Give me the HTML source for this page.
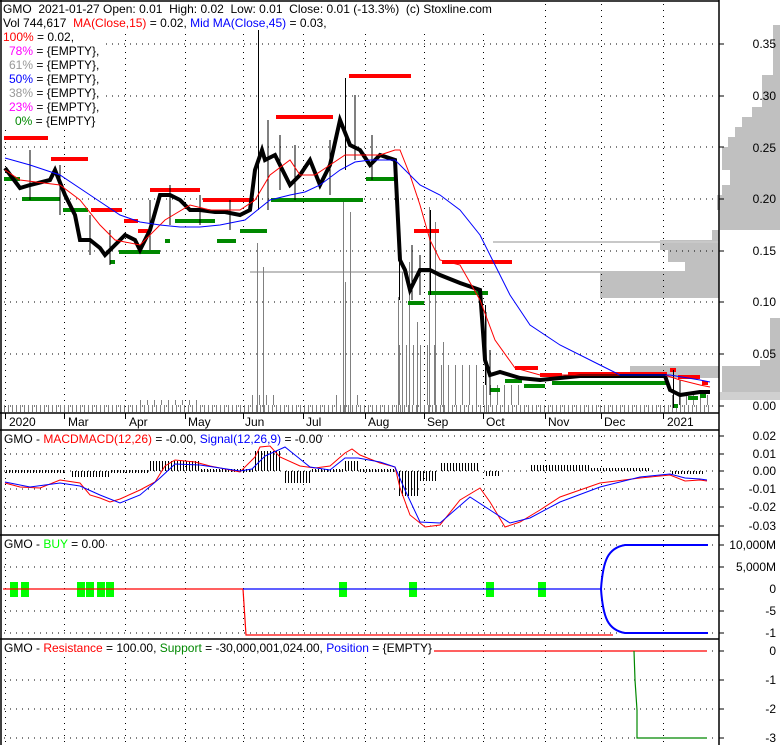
<!DOCTYPE html>
<html><head><meta charset="utf-8"><style>
html,body{margin:0;padding:0;background:#fff;}
svg{display:block;font-family:"Liberation Sans",Arial,sans-serif;font-size:12px;}
text{white-space:pre;}
</style></head><body>
<svg width="780" height="745" xmlns="http://www.w3.org/2000/svg">
<defs>
<pattern id="vp" x="0" y="0" width="4" height="10" patternUnits="userSpaceOnUse"><rect x="0" y="0" width="1" height="10" fill="#808080"/></pattern>
<pattern id="vp2" x="0" y="0" width="7" height="10" patternUnits="userSpaceOnUse"><rect x="0" y="0" width="1" height="10" fill="#808080"/></pattern>
<pattern id="hp" x="0" y="0" width="3" height="10" patternUnits="userSpaceOnUse"><rect x="0" y="0" width="1" height="10" fill="#000"/></pattern>
</defs>
<rect width="780" height="745" fill="#fff"/>
<g fill="#c0c0c0">
<polygon points="780,25 773,25 773,75 762,75 762,107 752,107 752,117 742,117 742,127 735,127 735,137 728,137 728,147 722,147 722,170 730,170 730,185 722,185 722,195 717,195 717,210 720,210 720,230 780,230"/>
<polygon points="719,230 712,230 712,240 660,240 660,250 668,250 668,262 685,262 685,273 600,273 600,298 719,298"/>
<polygon points="780,318 770,318 770,360 760,360 760,366 722,366 722,392 780,392"/>
<polygon points="719,366 630,366 630,378 719,378"/>
<rect x="719" y="392" width="61" height="8" fill="#d0d0d0"/>
</g>
<line x1="250" y1="272" x2="719" y2="272" stroke="#c0c0c0" stroke-width="2"/>
<line x1="493" y1="242" x2="719" y2="242" stroke="#c8c8c8" stroke-width="2"/>
<g stroke="#000" stroke-dasharray="1,5" stroke-width="1" shape-rendering="crispEdges">
<path d="M4 44H716M4 96H716M4 147H716M4 199H716M4 251H716M4 302H716M4 354H716M4 406H716M4 436H716M4 454H716M4 471H716M4 489H716M4 507H716M4 526H716M4 545H716M4 567H716M4 589H716M4 611H716M4 633H716M4 651H716M4 680H716M4 709H716M4 738H716"/>
<path d="M5.5 4V410M64.5 4V410M125.5 4V410M185.5 4V410M243.5 4V410M303.5 4V410M365.5 4V410M424.5 4V410M483.5 4V410M545.5 4V410M601.5 4V410M663.5 4V410"/>
<path d="M5.5 436V532M64.5 436V532M125.5 436V532M185.5 436V532M243.5 436V532M303.5 436V532M365.5 436V532M424.5 436V532M483.5 436V532M545.5 436V532M601.5 436V532M663.5 436V532"/>
<path d="M5.5 540V636M64.5 540V636M125.5 540V636M185.5 540V636M243.5 540V636M303.5 540V636M365.5 540V636M424.5 540V636M483.5 540V636M545.5 540V636M601.5 540V636M663.5 540V636"/>
<path d="M5.5 645V742M64.5 645V742M125.5 645V742M185.5 645V742M243.5 645V742M303.5 645V742M365.5 645V742M424.5 645V742M483.5 645V742M545.5 645V742M601.5 645V742M663.5 645V742"/>
</g>
<rect x="3" y="405" width="709" height="7" fill="url(#vp)"/>
<rect x="140" y="400" width="60" height="5" fill="url(#vp2)"/>
<rect x="248" y="395" width="30" height="10" fill="url(#vp2)"/>
<rect x="330" y="395" width="30" height="10" fill="url(#vp2)"/>
<rect x="395" y="345" width="40" height="60" fill="url(#vp2)"/>
<rect x="435" y="365" width="45" height="40" fill="url(#vp2)"/>
<rect x="480" y="385" width="40" height="20" fill="url(#vp2)"/>
<rect x="670" y="395" width="40" height="10" fill="url(#vp2)"/>
<path stroke="#808080" stroke-width="1" d="M257.5 412V243M263.5 412V267M345.5 412V282M343.5 412V202M350.5 412V212M398.5 412V297M402.5 412V272M409.5 412V262M417.5 412V322M429.5 412V207M435.5 412V222M443.5 412V342M486.5 412V312"/>
<g stroke-width="4">
<line x1="4" y1="138" x2="48" y2="138" stroke="#f00"/>
<line x1="51" y1="159" x2="88" y2="159" stroke="#f00"/>
<line x1="91" y1="210" x2="122" y2="210" stroke="#f00"/>
<line x1="124" y1="221" x2="138" y2="221" stroke="#f00"/>
<line x1="138" y1="231" x2="148" y2="231" stroke="#f00"/>
<line x1="150" y1="190" x2="200" y2="190" stroke="#f00"/>
<line x1="203" y1="200" x2="254" y2="200" stroke="#f00"/>
<line x1="276" y1="117" x2="333" y2="117" stroke="#f00"/>
<line x1="349" y1="76" x2="411" y2="76" stroke="#f00"/>
<line x1="414" y1="231" x2="439" y2="231" stroke="#f00"/>
<line x1="442" y1="262" x2="512" y2="262" stroke="#f00"/>
<line x1="515" y1="368" x2="538" y2="368" stroke="#f00"/>
<line x1="540" y1="375" x2="562" y2="375" stroke="#f00"/>
<line x1="568" y1="374" x2="667" y2="374" stroke="#f00"/>
<line x1="670" y1="370" x2="676" y2="370" stroke="#f00"/>
<line x1="678" y1="377" x2="700" y2="377" stroke="#f00"/>
<line x1="702" y1="383" x2="708" y2="383" stroke="#f00"/>
<line x1="4" y1="179" x2="20" y2="179" stroke="#080"/>
<line x1="22" y1="199" x2="60" y2="199" stroke="#080"/>
<line x1="63" y1="210" x2="88" y2="210" stroke="#080"/>
<line x1="110" y1="262" x2="115" y2="262" stroke="#080"/>
<line x1="119" y1="252" x2="160" y2="252" stroke="#080"/>
<line x1="165" y1="241" x2="170" y2="241" stroke="#080"/>
<line x1="175" y1="221" x2="215" y2="221" stroke="#080"/>
<line x1="217" y1="241" x2="236" y2="241" stroke="#080"/>
<line x1="240" y1="231" x2="267" y2="231" stroke="#080"/>
<line x1="271" y1="200" x2="363" y2="200" stroke="#080"/>
<line x1="366" y1="179" x2="396" y2="179" stroke="#080"/>
<line x1="408" y1="303" x2="424" y2="303" stroke="#080"/>
<line x1="428" y1="293" x2="488" y2="293" stroke="#080"/>
<line x1="490" y1="390" x2="500" y2="390" stroke="#080"/>
<line x1="505" y1="381" x2="522" y2="381" stroke="#080"/>
<line x1="524" y1="386" x2="545" y2="386" stroke="#080"/>
<line x1="552" y1="383" x2="669" y2="383" stroke="#080"/>
<line x1="673" y1="406" x2="678" y2="406" stroke="#080"/>
<line x1="688" y1="398" x2="698" y2="398" stroke="#080"/>
<line x1="700" y1="396" x2="706" y2="396" stroke="#080"/>
</g>
<polyline fill="none" stroke="#000" stroke-width="4" points="5,168 20,188 30,185 50,180 55,170 65,195 75,215 80,240 90,240 100,248 105,255 110,250 115,245 125,235 135,240 140,250 150,230 160,195 170,195 180,200 190,210 200,210 215,212 225,212 240,215 250,210 255,170 262,150 265,160 275,155 290,185 300,175 310,160 320,185 330,165 340,120 350,145 360,150 370,165 380,155 395,160 400,260 405,270 410,290 420,270 430,270 440,275 460,283 480,290 485,360 490,375 500,372 510,375 520,378 540,380 560,378 580,376 600,376 665,376 670,390 680,395 700,392 710,392"/>
<path stroke="#000" stroke-width="1" d="M258.5 30V210M345.5 78V170M399.5 233V300M430.5 210V295M485.5 305V385M673.5 370V408M268 120V210M280 135V190M295 145V200M330 140V195M355 95V160M372 135V180M412 245V300M420 255V295M490 350V395M680 380V405M30 150V200M60 165V215M90 215V255M110 230V265M150 200V250M170 185V225M200 195V225M230 200V230"/>
<polyline fill="none" stroke="#f00" stroke-width="1" points="5,170 20,180 60,185 80,200 100,225 115,240 140,245 165,220 190,205 210,210 240,210 255,200 270,175 290,160 300,175 315,175 330,165 345,155 360,155 380,155 395,150 400,150 410,175 420,205 430,240 440,260 460,265 480,300 495,340 515,368 540,375 600,375 665,375 680,380 700,385 710,387"/>
<polyline fill="none" stroke="#00f" stroke-width="1" points="5,158 30,165 60,175 90,195 120,215 140,222 160,225 180,227 200,227 220,225 245,220 255,212 270,200 290,195 305,192 320,185 340,170 355,162 370,160 385,160 395,160 420,185 440,195 460,210 480,235 495,265 510,295 530,325 560,345 600,365 620,375 670,375 700,380 710,382"/>
<rect x="6" y="470" width="60" height="3" fill="url(#hp)"/>
<rect x="70" y="471" width="40" height="6" fill="url(#hp)"/>
<rect x="110" y="470" width="40" height="3" fill="url(#hp)"/>
<rect x="150" y="461" width="50" height="10" fill="url(#hp)"/>
<rect x="200" y="469" width="55" height="3" fill="url(#hp)"/>
<rect x="255" y="451" width="25" height="20" fill="url(#hp)"/>
<rect x="285" y="471" width="25" height="12" fill="url(#hp)"/>
<rect x="310" y="469" width="35" height="3" fill="url(#hp)"/>
<rect x="345" y="461" width="15" height="10" fill="url(#hp)"/>
<rect x="360" y="469" width="35" height="3" fill="url(#hp)"/>
<rect x="397" y="471" width="22" height="25" fill="url(#hp)"/>
<rect x="420" y="471" width="18" height="10" fill="url(#hp)"/>
<rect x="440" y="463" width="40" height="8" fill="url(#hp)"/>
<rect x="485" y="471" width="15" height="5" fill="url(#hp)"/>
<rect x="530" y="465" width="60" height="6" fill="url(#hp)"/>
<rect x="590" y="468" width="60" height="3" fill="url(#hp)"/>
<rect x="670" y="471" width="35" height="3" fill="url(#hp)"/>
<polyline fill="none" stroke="#f00" stroke-width="1" points="5,483 20,487 40,488 60,480 80,483 90,495 100,498 110,502 120,499 140,490 155,482 165,466 175,460 195,462 210,466 240,472 255,457 260,447 270,446 280,457 300,466 315,468 330,466 345,453 352,449 360,455 380,463 395,467 400,488 410,515 425,527 440,525 460,500 480,488 490,502 505,527 520,522 540,510 560,497 600,483 640,478 670,475 685,481 700,480 707,481"/>
<polyline fill="none" stroke="#00f" stroke-width="1" points="5,482 30,487 60,483 80,486 100,495 120,503 140,495 160,478 175,464 200,465 240,471 252,469 265,456 285,447 295,455 310,467 330,470 345,458 358,458 380,462 395,467 405,490 420,522 440,523 470,497 490,510 510,523 530,518 560,502 600,487 640,477 670,474 685,478 700,479 707,480"/>
<g fill="#0f0">
<rect x="10" y="582" width="8" height="15"/><rect x="21" y="582" width="8" height="15"/><rect x="77" y="582" width="8" height="15"/><rect x="86" y="582" width="8" height="15"/><rect x="97" y="582" width="8" height="15"/><rect x="106" y="582" width="8" height="15"/><rect x="339" y="582" width="8" height="15"/><rect x="409" y="582" width="8" height="15"/><rect x="486" y="582" width="8" height="15"/><rect x="538" y="582" width="8" height="15"/>
</g>
<polyline fill="none" stroke="#f00" stroke-width="1.2" points="3,589 243,589 246,635 613,635"/>
<line x1="243" y1="589" x2="601" y2="589" stroke="#00f" stroke-width="1.2"/>
<path d="M601,589 C603,560 608,548 625,545 L708,545 M601,589 C603,618 608,630 625,633 L708,633" fill="none" stroke="#00f" stroke-width="2"/>
<line x1="3" y1="651" x2="707" y2="651" stroke="#f00" stroke-width="1.2"/>
<polyline fill="none" stroke="#080" stroke-width="1.2" points="634,651 635,680 637,710 637,738 707,738"/>
<g stroke="#000" stroke-width="1.5" fill="none">
<line x1="0" y1="1" x2="719" y2="1"/>
<line x1="1" y1="0" x2="1" y2="745"/>
<line x1="719" y1="0" x2="719" y2="745"/>
<line x1="0" y1="413" x2="719" y2="413"/>
<line x1="0" y1="430" x2="719" y2="430"/>
<line x1="0" y1="535" x2="719" y2="535"/>
<line x1="0" y1="639" x2="719" y2="639"/>
</g>
<path stroke="#000" stroke-width="1" d="M5.5 413V419M64.5 413V419M125.5 413V419M185.5 413V419M243.5 413V419M303.5 413V419M365.5 413V419M424.5 413V419M483.5 413V419M545.5 413V419M601.5 413V419M663.5 413V419M719 44H724M719 96H724M719 147H724M719 199H724M719 251H724M719 302H724M719 354H724M719 406H724M719 436H724M719 454H724M719 471H724M719 489H724M719 507H724M719 526H724M719 545H724M719 567H724M719 589H724M719 611H724M719 633H724M719 651H724M719 680H724M719 709H724M719 738H724"/>
<g fill="#fff">
<rect x="2" y="2" width="498" height="28"/>
<rect x="2" y="30" width="100" height="98"/>
<rect x="2" y="431" width="320" height="14"/>
<rect x="2" y="536" width="104" height="14"/>
<rect x="2" y="641" width="432" height="13"/>
</g>
<g fill="#000">
<text x="3" y="13" xml:space="preserve">GMO  2021-01-27 Open: 0.01  High: 0.02  Low: 0.01  Close: 0.01 (-13.3%)  (c) Stoxline.com</text>
<text x="3" y="27" xml:space="preserve">Vol 744,617  <tspan fill="#f00">MA(Close,15)</tspan> = 0.02, <tspan fill="#00f">Mid MA(Close,45)</tspan> = 0.03,</text>
<text x="3" y="41"><tspan fill="#f00">100%</tspan> = 0.02,</text>
<text x="9" y="55"><tspan fill="#f0f">78%</tspan> = {EMPTY},</text>
<text x="9" y="69"><tspan fill="#999">61%</tspan> = {EMPTY},</text>
<text x="9" y="83"><tspan fill="#00f">50%</tspan> = {EMPTY},</text>
<text x="9" y="97"><tspan fill="#999">38%</tspan> = {EMPTY},</text>
<text x="9" y="111"><tspan fill="#f0f">23%</tspan> = {EMPTY},</text>
<text x="15" y="125"><tspan fill="#080">0%</tspan> = {EMPTY}</text>
<text x="4" y="443">GMO - <tspan fill="#f00">MACDMACD(12,26)</tspan> = -0.00, <tspan fill="#00f">Signal(12,26,9)</tspan> = -0.00</text>
<text x="4" y="548">GMO - <tspan fill="#0f0">BUY</tspan> = 0.00</text>
<text x="4" y="652">GMO - <tspan fill="#f00">Resistance</tspan> = 100.00, <tspan fill="#080">Support</tspan> = -30,000,001,024.00, <tspan fill="#00f">Position</tspan> = {EMPTY}</text>
<g text-anchor="end">
<text x="776" y="48">0.35</text><text x="776" y="100">0.30</text><text x="776" y="152">0.25</text><text x="776" y="203">0.20</text><text x="776" y="255">0.15</text><text x="776" y="306">0.10</text><text x="776" y="358">0.05</text><text x="776" y="410">0.00</text>
<text x="776" y="440">0.02</text><text x="776" y="458">0.01</text><text x="776" y="475">0.00</text><text x="776" y="493">-0.01</text><text x="776" y="511">-0.02</text><text x="776" y="530">-0.03</text>
<text x="776" y="549">10,000M</text><text x="776" y="571">5,000M</text><text x="776" y="593">0</text><text x="776" y="615">-5</text><text x="776" y="637">-1</text>
<text x="776" y="655">0</text><text x="776" y="684">-1</text><text x="776" y="713">-2</text><text x="776" y="742">-3</text>
</g>
<text x="9" y="426">2020</text><text x="68" y="426">Mar</text><text x="129" y="426">Apr</text><text x="188" y="426">May</text><text x="245" y="426">Jun</text><text x="306" y="426">Jul</text><text x="368" y="426">Aug</text><text x="427" y="426">Sep</text><text x="486" y="426">Oct</text><text x="548" y="426">Nov</text><text x="604" y="426">Dec</text><text x="667" y="426">2021</text>
</g>
</svg>
</body></html>
